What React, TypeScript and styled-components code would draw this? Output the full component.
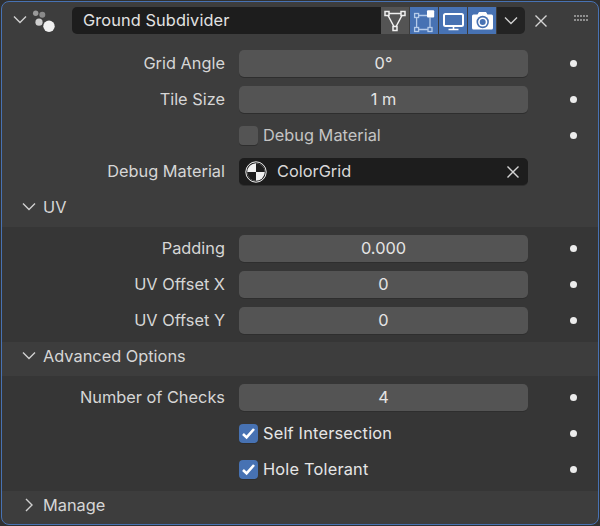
import React from "react";
import styled, { createGlobalStyle } from "styled-components";

const GlobalStyle = createGlobalStyle`
  html, body {
    margin: 0;
    padding: 0;
    background: #303030;
  }
  body {
    width: 600px;
    height: 526px;
    overflow: hidden;
    font-family: Inter, "Liberation Sans", sans-serif;
    font-size: 16.35px;
    color: #e0e0e0;
  }
`;

const Panel = styled.div`
  box-sizing: border-box;
  width: 598px;
  height: 524px;
  margin: 1px;
  border: 1px solid #4772b3;
  border-radius: 8px;
  background: #3d3d3d;
  overflow: hidden;
`;

const Header = styled.div`
  display: flex;
  align-items: center;
  height: 27px;
  margin-top: 5px;
  padding-left: 7px;
`;

const HeaderToggle = styled.div`
  display: flex;
  width: 22px;
  margin-bottom: 2px;
  justify-content: center;
  align-items: center;
`;

const ModifierMark = styled.svg`
  width: 28px;
  height: 24px;
  margin-right: 13px;
`;

const NameBox = styled.div`
  display: flex;
  align-items: center;
  width: 309px;
  height: 27px;
  box-sizing: border-box;
  padding: 0 0 2px 11px;
  background: #1d1d1d;
  border-radius: 5px 0 0 5px;
  color: #e2e2e2;
  letter-spacing: 0.1px;
`;

const ToggleGroup = styled.div`
  display: flex;
  gap: 1px;
`;

const Toggle = styled.div<{ $on?: boolean }>`
  display: flex;
  width: 28px;
  height: 27px;
  align-items: center;
  justify-content: center;
  background: ${(p) => (p.$on ? "#4772b3" : "#545454")};
`;

const DropTail = styled.div`
  display: flex;
  width: 28px;
  height: 27px;
  margin-left: 1px;
  align-items: center;
  justify-content: center;
  background: #232323;
  border-radius: 0 5px 5px 0;
`;

const CloseWrap = styled.div`
  display: flex;
  margin-left: 6px;
  width: 20px;
  justify-content: center;
`;

const Grip = styled.div`
  display: grid;
  grid-template-columns: repeat(5, 2px);
  gap: 2px 1px;
  margin-left: 23px;
  margin-top: -6px;

  i {
    width: 2px;
    height: 2px;
    background: #8f8f8f;
  }
`;

const Body = styled.div<{ $top?: number }>`
  display: flex;
  flex-direction: column;
  gap: 9px;
  padding: ${(p) => p.$top ?? 8}px 0 8px;
`;

const Sunken = styled(Body)`
  background: #363636;
`;

const Row = styled.div`
  display: grid;
  grid-template-columns: 223px 289px 45px;
  column-gap: 14px;
  height: 27px;
  align-items: center;
`;

const Label = styled.div`
  padding-bottom: 2px;
  text-align: right;
  color: #d6d6d6;
`;

const Field = styled.div`
  height: 27px;
  line-height: 26px;
  text-align: center;
  background: #545454;
  border-radius: 5px;
  box-shadow: 0 1px 0 #2e2e2e;
  color: #e4e4e4;
`;

const CheckCell = styled.div`
  display: flex;
  align-items: center;
  gap: 5px;
`;

const CheckBox = styled.div<{ $on?: boolean }>`
  display: flex;
  width: 19px;
  height: 19px;
  align-items: center;
  justify-content: center;
  background: ${(p) => (p.$on ? "#4772b3" : "#545454")};
  border-radius: 4px;
  box-shadow: 0 1px 0 #2e2e2e;
`;

const CheckLabel = styled.span<{ $on?: boolean }>`
  padding-bottom: 2px;
  color: ${(p) => (p.$on ? "#e6e6e6" : "#c4c4c4")};
  letter-spacing: ${(p) => (p.$on ? "0.2px" : "0")};
`;

const MaterialField = styled.div`
  display: flex;
  align-items: center;
  height: 27px;
  box-sizing: border-box;
  padding: 0 8px 0 6px;
  background: #1d1d1d;
  border-radius: 5px;
  box-shadow: 0 1px 0 #2e2e2e;
  color: #d8d8d8;
`;

const MaterialName = styled.span`
  flex: 1;
  margin-left: 10px;
  padding-bottom: 2px;
`;

const Dot = styled.div`
  width: 7px;
  height: 7px;
  margin-left: 28px;
  border-radius: 50%;
  background: #ececec;
`;

const SectionHeader = styled.div<{ $tall?: number }>`
  display: flex;
  align-items: center;
  box-sizing: border-box;
  height: ${(p) => p.$tall ?? 34}px;
  padding-left: 16px;
  padding-bottom: 6px;
  color: #d6d6d6;
`;

const SectionArrow = styled.div`
  display: flex;
  width: 22px;
  margin-right: 3px;
  justify-content: center;
`;

const chevronDown = (
  <svg width="16" height="10" viewBox="0 0 16 10" fill="none" stroke="#d0d0d0" strokeWidth="1.4">
    <path d="M2 1.5 L8 7.5 L14 1.5" />
  </svg>
);

const chevronRight = (
  <svg width="10" height="16" viewBox="0 0 10 16" fill="none" stroke="#d0d0d0" strokeWidth="1.4">
    <path d="M2 2 L8 8 L2 14" />
  </svg>
);

const cross = (
  <svg width="14" height="14" viewBox="0 0 14 14" fill="none" stroke="#d4d4d4" strokeWidth="1.4">
    <path d="M1.5 1.5 L12.5 12.5 M12.5 1.5 L1.5 12.5" />
  </svg>
);

const tick = (
  <svg width="15" height="13" viewBox="0 0 15 13" fill="none" stroke="#fff" strokeWidth="2.6">
    <path d="M2 7 L5.6 10.4 L13 2" />
  </svg>
);

function App() {
  return (
    <>
      <GlobalStyle />
      <Panel>
        <Header>
          <HeaderToggle>{chevronDown}</HeaderToggle>
          <ModifierMark viewBox="0 0 28 24">
            <circle cx="4.7" cy="4.2" r="2.7" fill="#9a9a9a" />
            <circle cx="11.3" cy="5.8" r="3" fill="#8a8a8a" />
            <circle cx="8" cy="13.2" r="3.6" fill="#cfcfcf" />
            <circle cx="18" cy="17.2" r="5.7" fill="#f0f0f0" />
          </ModifierMark>
          <NameBox>Ground Subdivider</NameBox>
          <ToggleGroup>
            <Toggle>
              <svg width="24" height="24" viewBox="0 0 24 24" fill="none" stroke="#f0f0f0" strokeWidth="1.5">
                <path d="M4 4.5 H20 L12 19.5 Z" />
                <rect x="2" y="2.5" width="4" height="4" fill="#545454" />
                <rect x="18" y="2.5" width="4" height="4" fill="#545454" />
                <rect x="10" y="17.5" width="4" height="4" fill="#545454" />
              </svg>
            </Toggle>
            <Toggle $on>
              <svg width="24" height="24" viewBox="0 0 24 24" fill="none" stroke="#b5cbe9" strokeWidth="1.3">
                <path d="M4.6 8.5 V18.5 M6.6 20.5 H16 M18 18.5 V8.5 M6.6 6.5 H15" />
                <rect x="2.6" y="4.5" width="4" height="4" />
                <rect x="2.6" y="18.5" width="4" height="4" />
                <rect x="16" y="18.5" width="4" height="4" />
                <rect x="15" y="1.2" width="7.2" height="7.2" rx="1" fill="#fff" stroke="none" />
              </svg>
            </Toggle>
            <Toggle $on>
              <svg width="24" height="24" viewBox="0 0 24 24" fill="none" stroke="#fff" strokeWidth="1.6">
                <rect x="3" y="5" width="19" height="12" rx="1.5" strokeWidth="2" />
                <path d="M12.5 17 V20 M7.5 20.5 H17.5" />
              </svg>
            </Toggle>
            <Toggle $on>
              <svg width="24" height="24" viewBox="0 0 24 24" fill="none">
                <path d="M2 7 Q2 5.5 3.5 5.5 H7.5 L9 3 H16 L17.5 5.5 H21.5 Q23 5.5 23 7 V19 Q23 20.5 21.5 20.5 H3.5 Q2 20.5 2 19 Z" fill="#fff" />
                <circle cx="12.7" cy="13" r="6.2" fill="#4772b3" />
                <circle cx="12.7" cy="13" r="4.6" fill="#fff" />
                <circle cx="12.7" cy="13" r="3" fill="#4772b3" />
              </svg>
            </Toggle>
          </ToggleGroup>
          <DropTail>{chevronDown}</DropTail>
          <CloseWrap>{cross}</CloseWrap>
          <Grip>
            {Array.from({ length: 10 }, (_, i) => (
              <i key={i} />
            ))}
          </Grip>
        </Header>

        <Body $top={16}>
          <Row>
            <Label>Grid Angle</Label>
            <Field>0°</Field>
            <Dot />
          </Row>
          <Row>
            <Label>Tile Size</Label>
            <Field>1 m</Field>
            <Dot />
          </Row>
          <Row>
            <span />
            <CheckCell>
              <CheckBox />
              <CheckLabel>Debug Material</CheckLabel>
            </CheckCell>
            <Dot />
          </Row>
          <Row>
            <Label>Debug Material</Label>
            <MaterialField>
              <svg width="22" height="22" viewBox="0 0 22 22">
                <circle cx="11" cy="11" r="10.2" fill="none" stroke="#f0f0f0" strokeWidth="1" />
                <circle cx="11" cy="11" r="8.8" fill="#f0f0f0" />
                <path d="M11 11 V2.2 A8.8 8.8 0 0 1 19.8 11 Z" fill="#1d1d1d" />
                <path d="M11 11 H2.2 A8.8 8.8 0 0 0 11 19.8 Z" fill="#1d1d1d" />
              </svg>
              <MaterialName>ColorGrid</MaterialName>
              {cross}
            </MaterialField>
            <span />
          </Row>
        </Body>

        <SectionHeader>
          <SectionArrow>{chevronDown}</SectionArrow>
          UV
        </SectionHeader>
        <Sunken>
          <Row>
            <Label>Padding</Label>
            <Field>0.000</Field>
            <Dot />
          </Row>
          <Row>
            <Label>UV Offset X</Label>
            <Field>0</Field>
            <Dot />
          </Row>
          <Row>
            <Label>UV Offset Y</Label>
            <Field>0</Field>
            <Dot />
          </Row>
        </Sunken>

        <SectionHeader>
          <SectionArrow>{chevronDown}</SectionArrow>
          Advanced Options
        </SectionHeader>
        <Sunken>
          <Row>
            <Label>Number of Checks</Label>
            <Field>4</Field>
            <Dot />
          </Row>
          <Row>
            <span />
            <CheckCell>
              <CheckBox $on>{tick}</CheckBox>
              <CheckLabel $on>Self Intersection</CheckLabel>
            </CheckCell>
            <Dot />
          </Row>
          <Row>
            <span />
            <CheckCell>
              <CheckBox $on>{tick}</CheckBox>
              <CheckLabel $on>Hole Tolerant</CheckLabel>
            </CheckCell>
            <Dot />
          </Row>
        </Sunken>

        <SectionHeader $tall={33}>
          <SectionArrow>{chevronRight}</SectionArrow>
          Manage
        </SectionHeader>
      </Panel>
    </>
  );
}

export default App;
